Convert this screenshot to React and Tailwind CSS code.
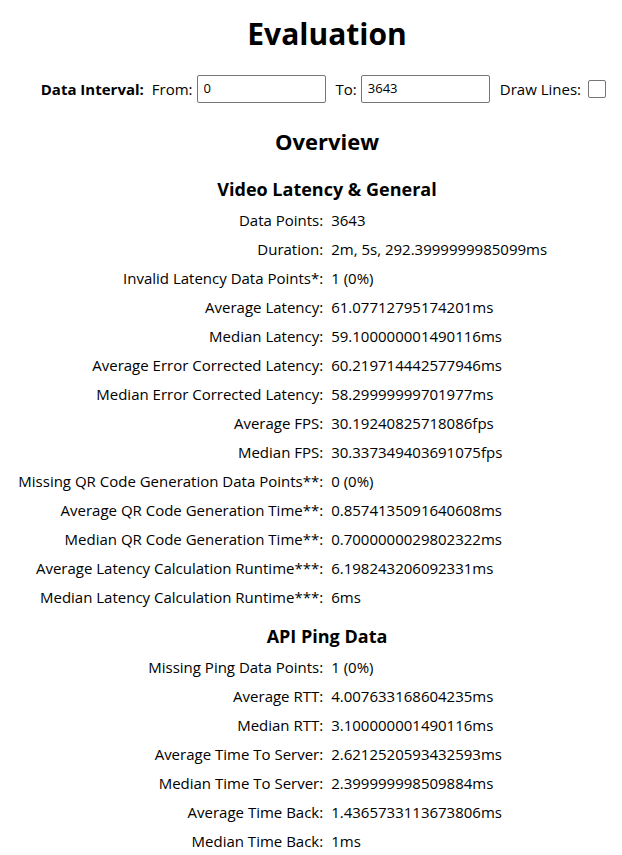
const general = [
  ["Data Points:", "3643"],
  ["Duration:", "2m, 5s, 292.3999999985099ms"],
  ["Invalid Latency Data Points*:", "1 (0%)"],
  ["Average Latency:", "61.07712795174201ms"],
  ["Median Latency:", "59.100000001490116ms"],
  ["Average Error Corrected Latency:", "60.219714442577946ms"],
  ["Median Error Corrected Latency:", "58.29999999701977ms"],
  ["Average FPS:", "30.19240825718086fps"],
  ["Median FPS:", "30.337349403691075fps"],
  ["Missing QR Code Generation Data Points**:", "0 (0%)"],
  ["Average QR Code Generation Time**:", "0.8574135091640608ms"],
  ["Median QR Code Generation Time**:", "0.7000000029802322ms"],
  ["Average Latency Calculation Runtime***:", "6.198243206092331ms"],
  ["Median Latency Calculation Runtime***:", "6ms"],
];

const ping = [
  ["Missing Ping Data Points:", "1 (0%)"],
  ["Average RTT:", "4.007633168604235ms"],
  ["Median RTT:", "3.100000001490116ms"],
  ["Average Time To Server:", "2.6212520593432593ms"],
  ["Median Time To Server:", "2.399999998509884ms"],
  ["Average Time Back:", "1.4365733113673806ms"],
  ["Median Time Back:", "1ms"],
];

function Section({ title, rows }) {
  return (
    <section>
      <h3 className="ml-8 text-center text-lg leading-6 font-bold">{title}</h3>
      <table className="mt-1 w-full table-fixed border-collapse">
        <colgroup>
          <col className="w-[52.6%]" />
          <col />
        </colgroup>
        <tbody>
          {rows.map(([label, value]) => (
            <tr key={label} className="h-[29px]">
              <th scope="row" className="p-0 pr-1 text-right font-normal whitespace-nowrap">{label}</th>
              <td className="p-0 pl-1 whitespace-nowrap">{value}</td>
            </tr>
          ))}
        </tbody>
      </table>
    </section>
  );
}

const inputClass =
  "h-7 w-[129px] rounded-xs border border-[#767676] bg-white px-1.5 pb-0.5 font-['Open_Sans',sans-serif] text-[13px]";

export default function App() {
  return (
    <main className="bg-white font-['Open_Sans',sans-serif] text-[15px] leading-5 text-black">
      <h1 className="ml-8 pt-3 text-center text-[30px] leading-11 font-bold">Evaluation</h1>
      <form className="mt-[19px] flex items-center justify-end pr-4 whitespace-nowrap">
        <strong className="mr-2">Data Interval:</strong>
        <label htmlFor="from" className="mr-1">From:</label>
        <input id="from" type="text" defaultValue="0" className={inputClass} />
        <label htmlFor="to" className="mr-1 ml-2.5">To:</label>
        <input id="to" type="text" defaultValue="3643" className={inputClass} />
        <label htmlFor="lines" className="mr-[7px] ml-2.5">Draw Lines:</label>
        <input
          id="lines"
          type="checkbox"
          className="size-[18px] appearance-none rounded-xs border border-[#767676] bg-white checked:bg-blue-600"
        />
      </form>
      <h2 className="mt-5 ml-8 text-center text-[22px] leading-9 font-bold">Overview</h2>
      <div className="mt-[18px] flex flex-col gap-[13px]">
        <Section title="Video Latency & General" rows={general} />
        <Section title="API Ping Data" rows={ping} />
      </div>
    </main>
  );
}
